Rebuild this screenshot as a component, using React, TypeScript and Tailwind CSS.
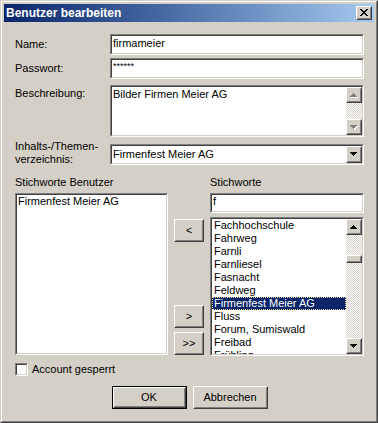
import React from "react";

type Box = { className?: string; inner?: string; children?: React.ReactNode };

// classic raised 3D edge (buttons, scroll arrows)
function Raised({ className = "", inner = "", children }: Box) {
  return (
    <div className={`border border-t-white border-l-white border-r-[#404040] border-b-[#404040] ${className}`}>
      <div
        className={`flex h-full w-full items-center justify-center border border-t-[#d4d0c8] border-l-[#d4d0c8] border-r-[#808080] border-b-[#808080] bg-[#d4d0c8] ${inner}`}
      >
        {children}
      </div>
    </div>
  );
}

// classic sunken client edge (edits, lists)
function Sunken({ className = "", inner = "", children }: Box) {
  return (
    <div className={`border border-t-[#808080] border-l-[#808080] border-r-white border-b-white ${className}`}>
      <div
        className={`h-full w-full border border-t-[#404040] border-l-[#404040] border-r-[#d4d0c8] border-b-[#d4d0c8] bg-white ${inner}`}
      >
        {children}
      </div>
    </div>
  );
}

const UP = "M3 0h1v1H3zM2 1h3v1H2zM1 2h5v1H1zM0 3h7v1H0z";
const DOWN = "M0 0h7v1H0zM1 1h5v1H1zM2 2h3v1H2zM3 3h1v1H3z";

function Arrow({ dir, disabled }: { dir: "up" | "down"; disabled?: boolean }) {
  const d = dir === "up" ? UP : DOWN;
  return (
    <svg width="8" height="5" viewBox="0 0 8 5" shapeRendering="crispEdges">
      {disabled && <path d={d} fill="#ffffff" transform="translate(1 1)" />}
      <path d={d} fill={disabled ? "#808080" : "#000000"} />
    </svg>
  );
}

function ScrollBar({ disabled, thumbTop }: { disabled?: boolean; thumbTop?: number }) {
  return (
    <div className="flex h-full w-[16px] shrink-0 flex-col">
      <Raised className="h-[16px] w-[16px] shrink-0">
        <Arrow dir="up" disabled={disabled} />
      </Raised>
      <div className="flex-1 bg-[image:repeating-conic-gradient(#d4d0c8_0_25%,#ffffff_0_50%)] bg-[length:2px_2px]">
        {thumbTop !== undefined && (
          <Raised className="mt-[20px] h-[8px] w-[16px]" />
        )}
      </div>
      <Raised className="h-[16px] w-[16px] shrink-0">
        <Arrow dir="down" disabled={disabled} />
      </Raised>
    </div>
  );
}

const keywords = [
  "Fachhochschule",
  "Fahrweg",
  "Farnli",
  "Farnliesel",
  "Fasnacht",
  "Feldweg",
  "Firmenfest Meier AG",
  "Fluss",
  "Forum, Sumiswald",
  "Freibad",
  "Frühling",
];

export default function App() {
  return (
    <div className="h-[423px] w-[378px] border border-t-[#d4d0c8] border-l-[#d4d0c8] border-r-[#404040] border-b-[#404040] bg-[#d4d0c8] font-['Liberation_Sans',Arial,sans-serif] text-[11px] leading-[13px] text-black">
      <div className="flex h-full w-full flex-col border border-t-white border-l-white border-r-[#808080] border-b-[#808080] p-[2px]">
        {/* title bar */}
        <div className="flex h-[18px] shrink-0 items-center justify-between bg-gradient-to-r from-[#0a246a] to-[#a6caf0] pl-[2px] pr-[2px]">
          <span className="text-[12px] font-bold leading-[14px] text-white">Benutzer bearbeiten</span>
          <Raised className="h-[14px] w-[16px]" inner="pb-[1px] pr-[1px]">
            <svg width="8" height="7" viewBox="0 0 8 7" shapeRendering="crispEdges">
              <path
                d="M0 0h2v1H0zM6 0h2v1H6zM1 1h2v1H1zM5 1h2v1H5zM2 2h4v1H2zM3 3h2v1H3zM2 4h4v1H2zM1 5h2v1H1zM5 5h2v1H5zM0 6h2v1H0zM6 6h2v1H6z"
                fill="#000"
              />
            </svg>
          </Raised>
        </div>

        <div className="flex flex-1 flex-col pl-[11px] pr-[10px] pt-[12px]">
          {/* Name */}
          <div className="flex h-[21px]">
            <div className="flex w-[95px] items-center">Name:</div>
            <Sunken className="h-full flex-1" inner="pl-[1px] pt-[1px]">
              firmameier
            </Sunken>
          </div>

          {/* Passwort */}
          <div className="mt-[3px] flex h-[21px]">
            <div className="flex w-[95px] items-center">Passwort:</div>
            <Sunken className="h-full flex-1" inner="pl-[1px] pt-[1px] text-[9px] leading-[11px]">
              ******
            </Sunken>
          </div>

          {/* Beschreibung */}
          <div className="mt-[6px] flex h-[52px]">
            <div className="w-[95px] pt-[2px]">Beschreibung:</div>
            <Sunken className="h-full flex-1" inner="flex">
              <div className="flex-1 pl-[1px] pt-[1px]">Bilder Firmen Meier AG</div>
              <ScrollBar disabled />
            </Sunken>
          </div>

          {/* Inhalts-/Themenverzeichnis */}
          <div className="mt-[7px] flex h-[21px]">
            <div className="-mt-[4px] w-[95px]">
              Inhalts-/Themen-
              <br />
              verzeichnis:
            </div>
            <Sunken className="h-full flex-1" inner="flex items-center">
              <div className="flex-1 pl-[1px]">Firmenfest Meier AG</div>
              <Raised className="h-[17px] w-[16px]">
                <Arrow dir="down" />
              </Raised>
            </Sunken>
          </div>

          {/* Stichworte */}
          <div className="mt-[11px] flex">
            <div className="flex w-[153px] flex-col">
              <div className="h-[13px]">Stichworte Benutzer</div>
              <Sunken className="mt-[4px] h-[162px]" inner="pl-[1px]">
                Firmenfest Meier AG
              </Sunken>
            </div>

            <div className="ml-[6px] flex w-[30px] flex-col pt-[43px]">
              <Raised className="h-[23px] w-[30px]">&lt;</Raised>
              <Raised className="mt-[63px] h-[23px] w-[30px]">&gt;</Raised>
              <Raised className="mt-[4px] h-[23px] w-[30px]">&gt;&gt;</Raised>
            </div>

            <div className="ml-[6px] flex flex-1 flex-col">
              <div className="h-[13px]">Stichworte</div>
              <Sunken className="mt-[4px] h-[20px]" inner="pl-[1px]">
                f
              </Sunken>
              <Sunken className="mt-[4px] h-[139px]" inner="flex">
                <div className="flex-1 overflow-hidden">
                  {keywords.map((k, i) =>
                    i === 6 ? (
                      <div
                        key={k}
                        className="h-[13px] border border-dotted border-[#e8d48a] bg-[#0a246a] pl-[1px] leading-[11px] text-white"
                      >
                        {k}
                      </div>
                    ) : (
                      <div key={k} className="h-[13px] pl-[2px]">
                        {k}
                      </div>
                    )
                  )}
                </div>
                <ScrollBar thumbTop={20} />
              </Sunken>
            </div>
          </div>

          {/* Account gesperrt */}
          <div className="mt-[7px] flex h-[13px] items-center">
            <Sunken className="h-[13px] w-[13px]" />
            <span className="ml-[4px]">Account gesperrt</span>
          </div>

          {/* Buttons */}
          <div className="mt-[10px] flex justify-center gap-[6px]">
            <div className="h-[23px] w-[75px] border border-black">
              <Raised className="h-full w-full">OK</Raised>
            </div>
            <Raised className="h-[23px] w-[75px]">Abbrechen</Raised>
          </div>
        </div>
      </div>
    </div>
  );
}
